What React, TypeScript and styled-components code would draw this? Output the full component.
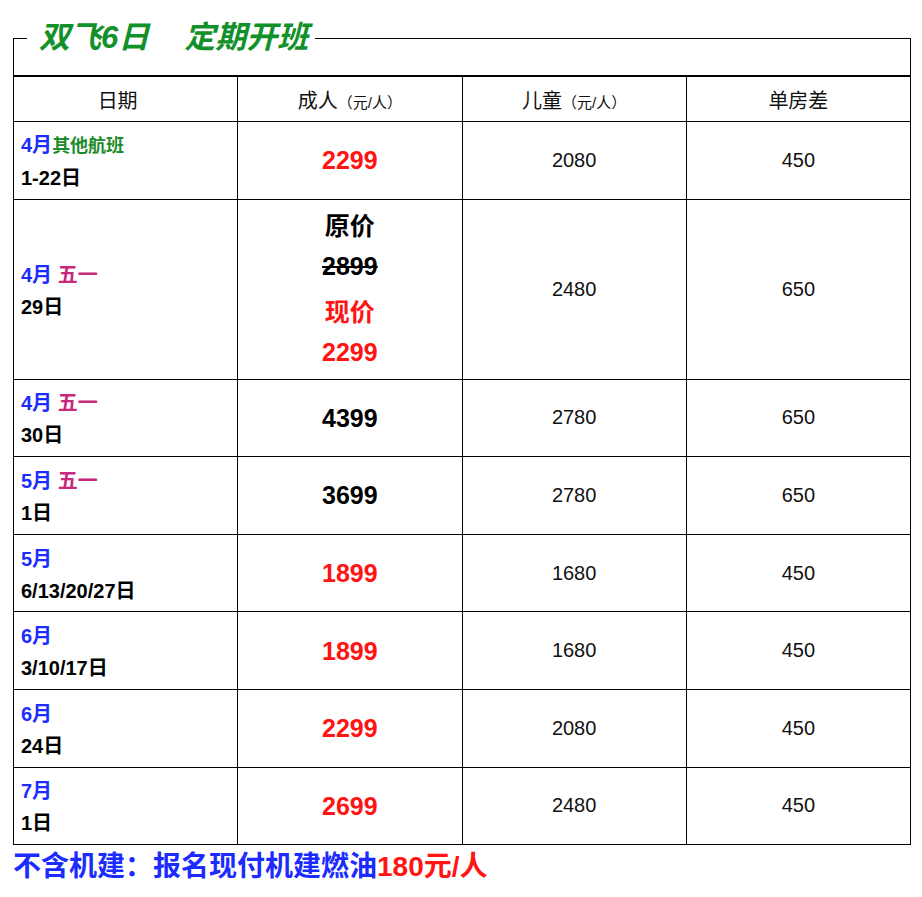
import React from 'react';
import styled, { createGlobalStyle } from 'styled-components';

const GlobalStyle = createGlobalStyle`
  body {
    margin: 0;
    background: #fff;
    font-family: "Liberation Sans", Arial, "Noto Sans CJK SC", sans-serif;
    color: #111;
  }
`;

type Row = {
  month: string;
  tag?: 'holiday' | 'other';
  days: string;
  adult: string;
  adultColor: 'red' | 'black';
  child: string;
  single: string;
  promo?: boolean;
};

const rows: Row[] = [
  { month: '4月', tag: 'other', days: '1-22日', adult: '2299', adultColor: 'red', child: '2080', single: '450' },
  { month: '4月', tag: 'holiday', days: '29日', adult: '2299', adultColor: 'red', child: '2480', single: '650', promo: true },
  { month: '4月', tag: 'holiday', days: '30日', adult: '4399', adultColor: 'black', child: '2780', single: '650' },
  { month: '5月', tag: 'holiday', days: '1日', adult: '3699', adultColor: 'black', child: '2780', single: '650' },
  { month: '5月', days: '6/13/20/27日', adult: '1899', adultColor: 'red', child: '1680', single: '450' },
  { month: '6月', days: '3/10/17日', adult: '1899', adultColor: 'red', child: '1680', single: '450' },
  { month: '6月', days: '24日', adult: '2299', adultColor: 'red', child: '2080', single: '450' },
  { month: '7月', days: '1日', adult: '2699', adultColor: 'red', child: '2480', single: '450' },
];

function App() {
  return (
    <Page>
      <GlobalStyle />
      <Frame>
        <Legend>
          双飞6日<Gap />定期开班
        </Legend>
      </Frame>
      <PriceTable>
        <thead>
          <tr>
            <HeadCell $shift>日期</HeadCell>
            <HeadCell>
              成人<Unit>（元/人）</Unit>
            </HeadCell>
            <HeadCell>
              儿童<Unit>（元/人）</Unit>
            </HeadCell>
            <HeadCell>单房差</HeadCell>
          </tr>
        </thead>
        <tbody>
          {rows.map((r, i) => (
            <BodyRow key={i} $tall={!!r.promo}>
              <DateCell>
                <Line>
                  <Month>{r.month}</Month>
                  {r.tag === 'other' && <Other>其他航班</Other>}
                  {r.tag === 'holiday' && <Holiday> 五一</Holiday>}
                </Line>
                <Line>{r.days}</Line>
              </DateCell>
              <AdultCell>
                {r.promo ? (
                  <PromoStack>
                    <PromoGroup>
                      <Price $color="black">原价</Price>
                      <Price $color="black" $strike>
                        2899
                      </Price>
                    </PromoGroup>
                    <PromoGroup>
                      <Price $color="red">现价</Price>
                      <Price $color="red">{r.adult}</Price>
                    </PromoGroup>
                  </PromoStack>
                ) : (
                  <Price $color={r.adultColor}>{r.adult}</Price>
                )}
              </AdultCell>
              <PlainCell>{r.child}</PlainCell>
              <PlainCell>{r.single}</PlainCell>
            </BodyRow>
          ))}
        </tbody>
      </PriceTable>
      <Footer>
        不含机建：报名现付机建燃油<FooterRed>180元/人</FooterRed>
      </Footer>
    </Page>
  );
}

export default App;

const Page = styled.div`
  padding: 21px 11px 0 13px;
  width: 898px;
`;

const Frame = styled.fieldset`
  margin: 0;
  padding: 0 0 20px;
  border: 1px solid #000;
  min-inline-size: 0;
`;

const Legend = styled.legend`
  margin-left: 13px;
  padding: 0 7px 0 12px;
  font-size: 31px;
  line-height: 34px;
  font-weight: bold;
  font-style: italic;
  color: #12912a;
  font-family: "Liberation Sans", Arial, "Noto Sans CJK SC", sans-serif;
`;

const Gap = styled.span`
  display: inline-block;
  width: 35px;
`;

const PriceTable = styled.table`
  width: 898px;
  border-collapse: collapse;
  table-layout: fixed;
  border: 1px solid #000;

  & td,
  & th {
    border: 1px solid #000;
  }
`;

const HeadCell = styled.th<{ $shift?: boolean }>`
  height: 44px;
  padding: 0 ${(p) => (p.$shift ? '16px' : '0')} 0 0;
  font-size: 20px;
  font-weight: normal;
  color: #111;
  text-align: center;
  vertical-align: middle;
`;

const Unit = styled.span`
  font-size: 15px;
`;

const BodyRow = styled.tr<{ $tall: boolean }>`
  height: ${(p) => (p.$tall ? '180px' : '77.6px')};
`;

const DateCell = styled.td`
  padding: 3px 0 0 7px;
  vertical-align: middle;
  font-size: 20px;
  font-weight: bold;
  color: #000;
`;

const Line = styled.div`
  line-height: 32px;
  white-space: nowrap;
`;

const Month = styled.span`
  color: #1c2cff;
`;

const Other = styled.span`
  color: #1e8c2c;
  font-size: 18px;
`;

const Holiday = styled.span`
  color: #c8287e;
`;

const AdultCell = styled.td`
  padding: 0;
  text-align: center;
  vertical-align: middle;
`;

const PromoStack = styled.div`
  display: flex;
  flex-direction: column;
  gap: 6px;
`;

const PromoGroup = styled.div`
  display: flex;
  flex-direction: column;
`;

const Price = styled.div<{ $color: 'red' | 'black'; $strike?: boolean }>`
  font-size: 25px;
  line-height: 40px;
  font-weight: bold;
  color: ${(p) => (p.$color === 'red' ? '#ff1414' : '#000')};
  text-decoration: ${(p) => (p.$strike ? 'line-through' : 'none')};
  text-decoration-thickness: 2px;
`;

const PlainCell = styled.td`
  padding: 0;
  text-align: center;
  vertical-align: middle;
  font-size: 20px;
  color: #111;
`;

const Footer = styled.div`
  padding-top: 5px;
  font-size: 28px;
  line-height: 34px;
  font-weight: bold;
  color: #1c2cff;
  white-space: nowrap;
`;

const FooterRed = styled.span`
  color: #ff1414;
`;
